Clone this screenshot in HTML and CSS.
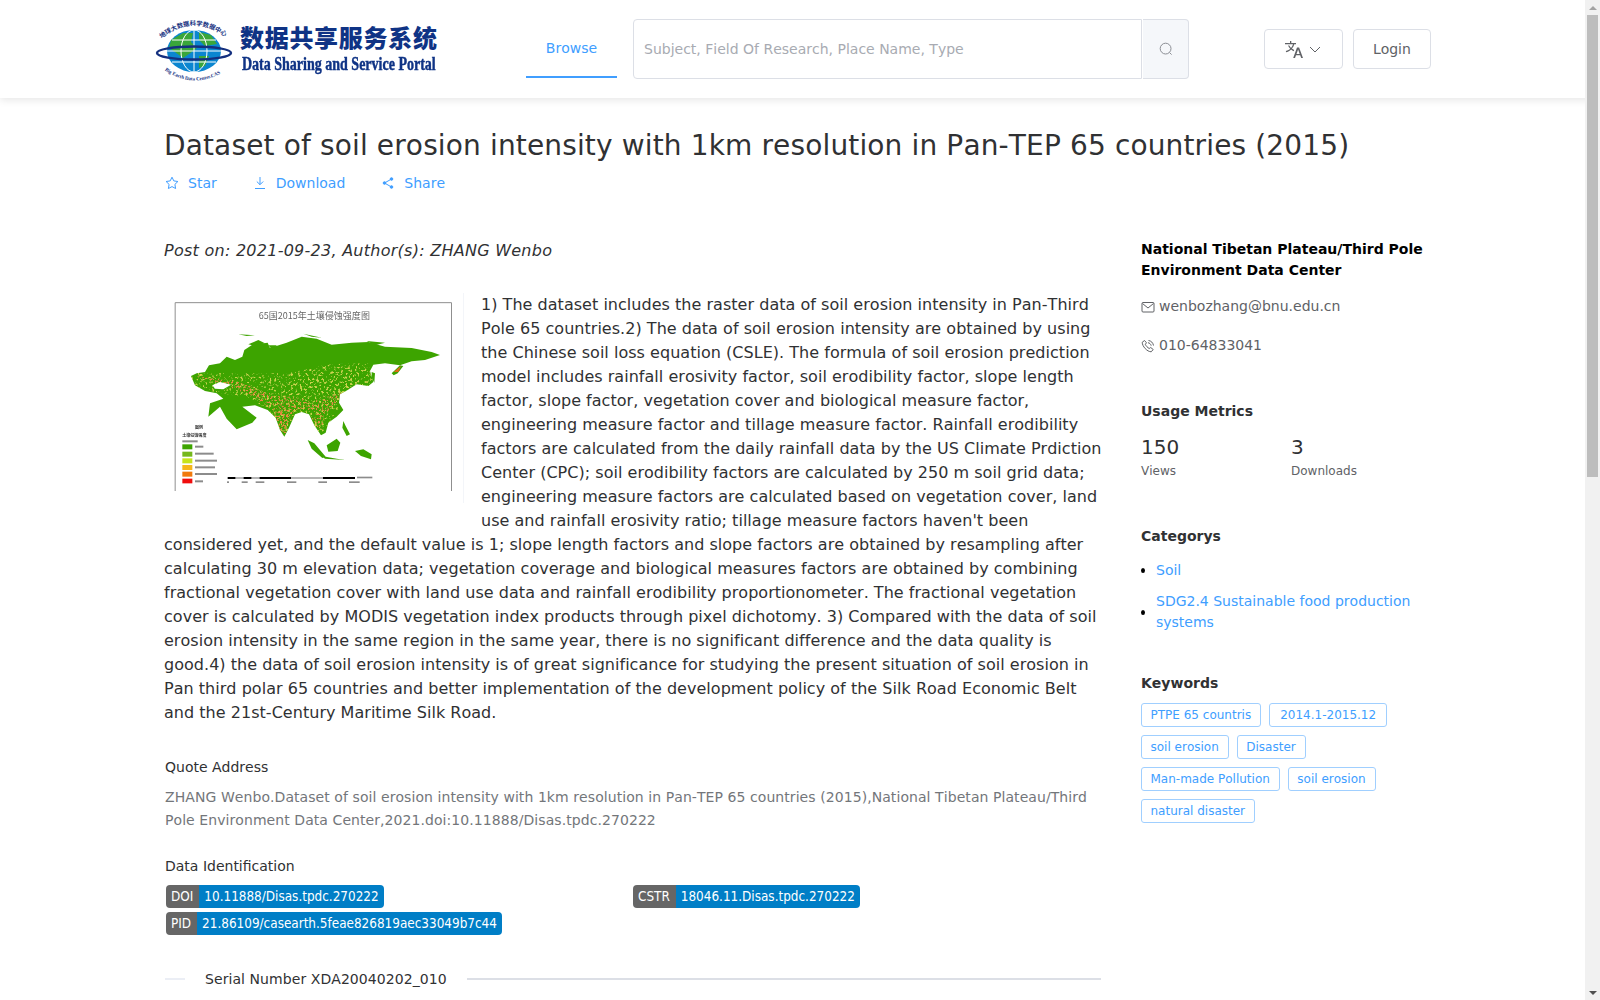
FILE: index.html
```html
<!DOCTYPE html>
<html lang="en">
<head>
<meta charset="utf-8">
<title>Dataset of soil erosion intensity</title>
<link rel="stylesheet" href="styles.css">
</head>
<body>
<header class="topbar">
  <a class="logo">
    <svg class="globe" width="80" height="64" viewBox="0 0 80 64">
      <defs><path id="arcT" d="M7 22 Q41 -7 76 22"/><path id="arcB" d="M10 51 Q40 73 72 53"/></defs>
      <ellipse cx="41" cy="33" rx="27" ry="21" fill="#0b86d0"/>
      <path d="M18 22 L30 15 L40 15 L38 24 L44 30 L36 36 L30 40 L22 34 L16 30 Z M46 14 L58 17 L64 26 L52 28 L46 22 Z M46 38 L56 38 L52 48 L46 50 Z" fill="#3aa63a"/>
      <g fill="none" stroke="#fff" stroke-width="1"><ellipse cx="41" cy="33" rx="13" ry="21"/><path d="M41 12V54M19 22H63M14 33H68M19 44H63"/></g>
      <ellipse cx="41" cy="35" rx="37" ry="6.500" fill="none" stroke="#14307f" stroke-width="2.400"/>
      <text class="globe-text"><textPath href="#arcT" startOffset="2">地球大数据科学数据中心</textPath></text>
      <text class="globe-sub"><textPath href="#arcB" startOffset="2">Big Earth Data Center.CAS</textPath></text>
    </svg>
    <span class="logo-words">
      <span class="logo-cn">数据共享服务系统</span>
      <span class="logo-en">Data Sharing and Service Portal</span>
    </span>
  </a>
  <nav class="tabs"><a class="tab">Browse</a></nav>
  <div class="search">
    <input class="search-input" placeholder="Subject, Field Of Research, Place Name, Type">
    <button class="search-btn" aria-label="Search">
      <svg width="14" height="14" viewBox="0 0 14 14" fill="none" stroke="#8b8e94" stroke-width="1"><circle cx="6.600" cy="6.600" r="5.400"/><path d="M10.600 10.600 12.600 12.600"/></svg>
    </button>
  </div>
  <div class="actions">
    <button class="btn lang" aria-label="Language">
      <svg width="18" height="17" viewBox="0 0 18 17" fill="#606266"><path d="M5 0h1.300v2H11v1.200H9.300c-.5 1.700-1.300 3.200-2.400 4.400 .7.6 1.500 1.100 2.300 1.500l-.5 1.100c-1-.5-1.800-1-2.600-1.700C5.100 9.600 3.800 10.500 1.200 11.200L.8 10.100c2.200-.6 3.400-1.400 4.400-2.300C4.300 6.800 3.600 5.700 3 4.500h1.300c.5 1 1.100 1.800 1.700 2.500.9-1 1.600-2.300 2-3.800H0V2h5z"/><path d="M12 6.500h2.100L18 17h-1.800l-1-2.700h-4.200l-1 2.700H8.200zM11.500 12.900h3.200L13.100 8.500z"/></svg>
      <svg class="chev" width="12" height="7" viewBox="0 0 12 7" fill="none" stroke="#606266" stroke-width="1"><path d="M1 1 6 6 11 1"/></svg>
    </button>
    <button class="btn login">Login</button>
  </div>
</header>

<main class="page">
  <h1 class="title">Dataset of soil erosion intensity with 1km resolution in Pan-TEP 65 countries (2015)</h1>
  <div class="links">
    <a class="link">
      <svg width="14" height="14" viewBox="0 0 14 14" fill="none" stroke="#409eff" stroke-width="1"><path d="M7 1.200 8.800 4.900 12.900 5.500 9.900 8.400 10.600 12.500 7 10.600 3.400 12.500 4.100 8.400 1.100 5.500 5.200 4.900Z"/></svg>
      Star</a>
    <a class="link">
      <svg width="14" height="14" viewBox="0 0 14 14" fill="none" stroke="#409eff" stroke-width="1"><path d="M7 1V8.500M3.800 5.500 7 8.700 10.200 5.500M2 12.500H12"/></svg>
      Download</a>
    <a class="link">
      <svg width="14" height="14" viewBox="0 0 14 14" fill="#409eff" stroke="#409eff" stroke-width="1"><path d="M10.500 3 3.500 7 10.500 11" fill="none"/><circle cx="10.500" cy="3" r="1.300"/><circle cx="3.500" cy="7" r="1.300"/><circle cx="10.500" cy="11" r="1.300"/></svg>
      Share</a>
  </div>

  <div class="columns">
    <article class="content">
      <p class="byline">Post on: 2021-09-23, Author(s): ZHANG Wenbo</p>
      <div class="desc">
        <svg class="thumb" width="300" height="210" viewBox="27 21 900 630">
          <defs>
            <filter id="soft" x="-5%" y="-5%" width="110%" height="110%"><feGaussianBlur stdDeviation="1.300"/></filter>
            <filter id="olive" x="0" y="0" width="100%" height="100%"><feTurbulence type="fractalNoise" baseFrequency=".14" numOctaves="2" seed="4"/><feColorMatrix values="0 0 0 0 .62  0 0 0 0 .66  0 0 0 0 .08  6 0 0 0 -3.350"/><feComposite in2="SourceAlpha" operator="in"/></filter>
            <filter id="rust" x="0" y="0" width="100%" height="100%"><feTurbulence type="fractalNoise" baseFrequency=".17" numOctaves="2" seed="9"/><feColorMatrix values="0 0 0 0 .80  0 0 0 0 .25  0 0 0 0 .06  7 0 0 0 -3.700"/><feComposite in2="SourceAlpha" operator="in"/></filter>
            <clipPath id="landClip"><path d="M108 270 125 262 150 258 162 238 195 232 215 212 240 222 262 212 268 192 292 176 338 170 345 186 395 170 440 152 485 158 530 176 590 170 640 168 690 182 770 186 830 198 855 207 810 222 770 226 735 238 690 232 655 236 645 255 655 288 640 300 605 295 578 312 555 325 552 350 565 372 545 392 520 410 512 440 498 448 478 418 462 385 440 378 420 385 402 425 388 452 375 432 362 395 338 372 300 358 262 362 305 395 292 410 245 430 215 398 195 362 160 392 165 352 205 338 185 322 150 315 120 298Z"/></clipPath>
          </defs>
          <path class="thumb-frame" d="M60.500 615V50H889.500V615"/>
          <path d="M927 21V651" stroke="#e6ebf2" stroke-width="3"/>
          <text class="map-title" x="478" y="98">65国2015年土壤侵蚀强度图</text>
          <g filter="url(#soft)">
            <path fill="#3ea406" d="M108 270 125 262 150 258 162 238 195 232 215 212 240 222 262 212 268 192 292 176 338 170 345 186 395 170 440 152 485 158 530 176 590 170 640 168 690 182 770 186 830 198 855 207 810 222 770 226 735 238 690 232 655 236 645 255 655 288 640 300 605 295 578 312 555 325 552 350 565 372 545 392 520 410 512 440 498 448 478 418 462 385 440 378 420 385 402 425 388 452 375 432 362 395 338 372 300 358 262 362 305 395 292 410 245 430 215 398 195 362 160 392 165 352 205 338 185 322 150 315 120 298Z"/>
            <g clip-path="url(#landClip)">
              <path filter="url(#olive)" d="M108 260 250 262 400 262 520 235 640 232 655 300 560 350 505 440 385 452 340 370 280 335 190 320 108 300Z"/>
              <path filter="url(#olive)" d="M400 262 640 250 640 300 540 330 420 310Z"/>
              <path filter="url(#rust)" d="M120 270 240 285 340 320 470 345 560 320 545 350 500 395 455 370 420 372 395 425 375 430 358 375 280 325 200 295Z"/>
              <path filter="url(#rust)" d="M355 375 410 375 392 445 372 430Z"/>
              <path filter="url(#rust)" d="M470 395 510 395 500 430 485 425Z"/>
            </g>
            <path fill="#fff" d="M172 298 195 288 228 296 205 310 180 308Z"/>
            <path fill="#3ea406" d="M710 262 735 238 745 240 728 262 716 268ZM650 258 660 262 658 290 650 275ZM458 462 478 472 512 512 502 516 470 488ZM515 478 545 458 556 470 548 495 520 497ZM500 510 545 518 570 522 510 518ZM565 405 572 420 585 445 575 450 562 425ZM600 495 625 490 650 505 648 520 618 510ZM250 145 300 148 275 150ZM445 143 500 155 470 152ZM635 165 690 170 660 178ZM280 175 310 162 330 172 300 180ZM340 178 365 178 355 195Z"/>
            <path fill="#e06a12" d="M716 258 738 240 730 258Z"/>
            <rect x="82" y="475" width="30" height="15" fill="#3ea406"/><rect x="82" y="497" width="30" height="15" fill="#75b81e"/><rect x="82" y="517" width="30" height="15" fill="#c6e41a"/><rect x="82" y="537" width="30" height="15" fill="#f6b71a"/><rect x="82" y="557" width="30" height="15" fill="#f17a10"/><rect x="82" y="578" width="30" height="14" fill="#f01010"/>
            <g fill="#000"><rect x="218" y="573" width="24" height="6"/><rect x="265" y="573" width="25" height="6"/><rect x="313" y="573" width="95" height="6"/><rect x="503" y="573" width="97" height="6"/></g>
            <g fill="#b5b5b5"><rect x="242" y="573" width="23" height="6"/><rect x="290" y="573" width="23" height="6"/><rect x="408" y="573" width="95" height="6"/></g>
            <g class="smudge"><rect x="120" y="479" width="25" height="6"/><rect x="120" y="500" width="56" height="6"/><rect x="120" y="521" width="66" height="6"/><rect x="120" y="541" width="60" height="6"/><rect x="120" y="561" width="66" height="6"/><rect x="120" y="583" width="24" height="6"/><rect x="82" y="463" width="46" height="6"/><rect x="606" y="572" width="46" height="5"/><rect x="216" y="586" width="6" height="5"/><rect x="260" y="586" width="18" height="5"/><rect x="302" y="586" width="26" height="5"/><rect x="396" y="586" width="28" height="5"/><rect x="490" y="586" width="26" height="5"/><rect x="582" y="586" width="32" height="5"/></g>
            <text class="strong" x="120" y="430">图例</text>
          </g>
          <text class="strong" x="82" y="453" filter="url(#soft)">土壤侵蚀强度</text>
        </svg>
        1) The dataset includes the raster data of soil erosion intensity in Pan-Third Pole 65 countries.2) The data of soil erosion intensity are obtained by using the Chinese soil loss equation (CSLE). The formula of soil erosion prediction model includes rainfall erosivity factor, soil erodibility factor, slope length factor, slope factor, vegetation cover and biological measure factor, engineering measure factor and tillage measure factor. Rainfall erodibility factors are calculated from the daily rainfall data by the US Climate Prdiction Center (CPC); soil erodibility factors are calculated by 250 m soil grid data; engineering measure factors are calculated based on vegetation cover, land use and rainfall erosivity ratio; tillage measure factors haven't been considered yet, and the default value is 1; slope length factors and slope factors are obtained by resampling after calculating 30 m elevation data; vegetation coverage and biological measures factors are obtained by combining fractional vegetation cover with land use data and rainfall erodibility proportionometer. The fractional vegetation cover is calculated by MODIS vegetation index products through pixel dichotomy. 3) Compared with the data of soil erosion intensity in the same region in the same year, there is no significant difference and the data quality is good.4) the data of soil erosion intensity is of great significance for studying the present situation of soil erosion in Pan third polar 65 countries and better implementation of the development policy of the Silk Road Economic Belt and the 21st-Century Maritime Silk Road.
      </div>

      <h3 class="sub quote-head">Quote Address</h3>
      <p class="quote">ZHANG Wenbo.Dataset of soil erosion intensity with 1km resolution in Pan-TEP 65 countries (2015),National Tibetan Plateau/Third Pole Environment Data Center,2021.doi:10.11888/Disas.tpdc.270222</p>

      <h3 class="sub id-head">Data Identification</h3>
      <div class="ids">
        <span class="badge"><b class="badge-k">DOI</b><span class="badge-v">10.11888/Disas.tpdc.270222</span></span>
        <span class="badge"><b class="badge-k">CSTR</b><span class="badge-v">18046.11.Disas.tpdc.270222</span></span>
        <span class="badge"><b class="badge-k">PID</b><span class="badge-v">21.86109/casearth.5feae826819aec33049b7c44</span></span>
      </div>

      <div class="divider"><span class="divider-text">Serial Number XDA20040202_010</span></div>
    </article>

    <aside class="side">
      <section class="center">
        <h4 class="center-name">National Tibetan Plateau/Third Pole Environment Data Center</h4>
        <p class="contact">
          <svg width="14" height="14" viewBox="0 0 14 14" fill="none" stroke="#606266" stroke-width="1"><rect x="1" y="2.500" width="12" height="9.500" rx="1"/><path d="M1.500 3.500 7 8l5.500-4.500"/></svg>
          wenbozhang@bnu.edu.cn</p>
        <p class="contact phone">
          <svg width="14" height="14" viewBox="0 0 14 14" fill="none" stroke="#606266" stroke-width="1"><path d="M3.500 1.500 1.200 3.300c0 4 5 9.500 9 9.500l2-2.300-2.500-2-1.500 1C6.500 8.500 5 7 4.300 5.300l1.200-1.500zM7.500 1.500c2.700.4 4.500 2.200 5 5M7 3.700c1.600.3 2.800 1.400 3.200 3"/></svg>
          010-64833041</p>
      </section>
      <section class="usage">
        <h4 class="side-head">Usage Metrics</h4>
        <div class="stats">
          <div class="stat"><span class="stat-n">150</span><span class="stat-l">Views</span></div>
          <div class="stat"><span class="stat-n">3</span><span class="stat-l">Downloads</span></div>
        </div>
      </section>
      <section class="cats">
        <h4 class="side-head">Categorys</h4>
        <ul class="cat-list">
          <li class="cat"><a>Soil</a></li>
          <li class="cat"><a>SDG2.4 Sustainable food production systems</a></li>
        </ul>
      </section>
      <section class="keys">
        <h4 class="side-head">Keywords</h4>
        <div class="tags">
          <span class="tag">PTPE 65 countris</span><span class="tag tag-wide">2014.1-2015.12</span>
          <span class="tag">soil erosion</span><span class="tag">Disaster</span>
          <span class="tag">Man-made Pollution</span><span class="tag">soil erosion</span>
          <span class="tag">natural disaster</span>
        </div>
      </section>
    </aside>
  </div>
</main>

<div class="scrollbar" aria-hidden="true">
  <span class="sb-up"></span>
  <span class="sb-thumb"></span>
  <span class="sb-down"></span>
</div>
</body>
</html>
```
FILE: styles.css
```css
* { box-sizing: border-box; }
html, body { height: 1000px; overflow: hidden; }
body {
  margin: 0;
  font-family: "DejaVu Sans", sans-serif;
  font-kerning: none;
  color: #303133;
  background: #fff;
}
h1, h3, h4, p, ul { margin: 0; padding: 0; }

/* drawn scrollbar, sits over the right edge of the page */
.scrollbar {
  position: fixed;
  top: 0;
  right: 0;
  bottom: 0;
  width: 15px;
  background: #f1f1f1;
  z-index: 5;
}
.sb-thumb { position: absolute; top: 15px; left: 2px; width: 11px; height: 462px; background: #bdbdbd; }
.sb-up, .sb-down { position: absolute; left: 3.500px; width: 0; height: 0; border: 4px solid transparent; }
.sb-up { top: 1.500px; border-bottom-color: #a3a3a3; }
.sb-down { bottom: 1.500px; border-top-color: #505050; }

.topbar {
  height: 98px;
  display: flex;
  align-items: flex-start;
  padding-left: 153px;
  background: #fff;
  box-shadow: 0 2px 8px rgba(0, 0, 0, .1);
}
.logo { display: flex; width: 373px; padding-top: 18px; }
.globe { flex: none; }
.globe-text { font: 700 6.300px "Noto Sans CJK SC", sans-serif; fill: #14307f; }
.globe-sub { font: 700 5px "Liberation Serif", serif; fill: #14307f; }
.logo-words { display: flex; flex-direction: column; margin-left: 7px; padding-top: 6px; }
.logo-cn {
  font: 900 24px/26px "Noto Sans CJK SC", sans-serif;
  letter-spacing: .7px;
  color: #0f3385;
  white-space: nowrap;
}
.logo-en {
  font: 700 18px/20px "Liberation Serif", serif;
  color: #0f3385;
  white-space: nowrap;
  margin-top: 4px;
  margin-left: 2px;
  transform: scaleX(.778);
  transform-origin: left center;
  -webkit-text-stroke: .45px #0f3385;
}
.tabs { display: flex; height: 78px; }
.tab {
  width: 91px;
  height: 78px;
  padding-top: 38px;
  line-height: 20px;
  text-align: center;
  font-size: 14px;
  color: #409eff;
  border-bottom: 2px solid #409eff;
}
.search { display: flex; width: 556px; height: 60px; margin: 19px 0 0 16px; }
.search-input {
  flex: 1;
  min-width: 0;
  height: 60px;
  padding: 0 10px;
  border: 1px solid #dcdfe6;
  border-radius: 4px 0 0 4px;
  font: 14px "DejaVu Sans", sans-serif;
  font-kerning: none;
  color: #606266;
  outline: 0;
}
.search-input::placeholder { color: #a8abb2; }
.search-btn {
  width: 46px;
  margin-left: 1px;
  display: flex;
  align-items: center;
  justify-content: center;
  background: #f5f7fa;
  border: 1px solid #dcdfe6;
  border-left: 0;
  border-radius: 0 4px 4px 0;
  padding: 0;
}
.actions { display: flex; gap: 10px; margin: 29px 0 0 75px; }
.btn {
  height: 40px;
  display: flex;
  align-items: center;
  justify-content: center;
  background: #fff;
  border: 1px solid #dcdfe6;
  border-radius: 4px;
  font: 14px "DejaVu Sans", sans-serif;
  color: #606266;
  padding: 0;
}
.lang { width: 79px; gap: 6px; padding-right: 1px; }
.login { width: 78px; }

.page { width: 1267px; margin-left: 164px; padding: 32px 0 0; }
.title { font-size: 28px; font-weight: 400; line-height: 32px; letter-spacing: .14px; color: #303133; white-space: nowrap; }
.links { display: flex; gap: 36px; margin-top: 12px; padding-left: 1px; }
.link { display: flex; align-items: center; gap: 9px; font-size: 14px; line-height: 18px; color: #409eff; }

.columns { display: flex; justify-content: space-between; margin-top: 47px; }
.content { width: 938px; }
.byline { font-size: 16px; font-style: italic; line-height: 24px; letter-spacing: .26px; color: #303133; }
.desc { margin-top: 30px; font-size: 16px; line-height: 24px; letter-spacing: .03px; color: #303133; }
.thumb { float: left; margin: 0 17px 16px 0; }
.thumb-frame { fill: none; stroke: #8f8f8f; stroke-width: 3; }
.map-title { font: 27px "Noto Sans CJK SC", sans-serif; fill: #666; text-anchor: middle; filter: url(#soft); }
.smudge { fill: #8c8c8c; }
.strong { font: 700 12px "Noto Sans CJK SC", sans-serif; fill: #333; }

.sub { font-size: 14px; font-weight: 400; line-height: 20px; color: #303133; padding-left: 1px; }
.quote-head { margin-top: 32px; }
.quote { margin-top: 9px; padding-left: 1px; font-size: 14px; line-height: 23px; letter-spacing: .07px; color: #73767a; }
.id-head { margin-top: 24px; }
.ids { display: grid; grid-template-columns: 467px 467px; gap: 4px 0; margin-top: 9px; padding-left: 2px; justify-items: start; }
.badge {
  display: inline-flex;
  height: 23px;
  line-height: 23px;
  font-family: "DejaVu Sans Condensed", "DejaVu Sans", sans-serif;
  font-stretch: condensed;
  font-size: 13.400px;
  color: #fff;
  border-radius: 4px;
  overflow: hidden;
}
.badge-k { font-weight: 400; background: #666; padding: 0 6px 0 5px; }
.badge-v { background: #007ec6; padding: 0 5px; }
.divider { display: flex; align-items: center; margin: 32px 1px 0 0; height: 24px; font-size: 14px; letter-spacing: .07px; }
.divider::before { content: ""; width: 20px; height: 2px; background: #ebeef5; margin-left: 1px; }
.divider::after { content: ""; flex: 1; height: 2px; background: #dcdfe6; }
.divider-text { padding: 0 20px; color: #303133; }

.side { width: 290px; }
.center-name { font-size: 14px; font-weight: 700; line-height: 21px; color: #000; }
.contact { display: flex; align-items: center; gap: 4px; margin-top: 15px; font-size: 14px; line-height: 21px; color: #606266; }
.contact.phone { margin-top: 18px; }
.side-head { font-size: 14px; font-weight: 700; line-height: 20px; color: #303133; }
.usage { margin-top: 45px; }
.stats { display: grid; grid-template-columns: 150px 140px; margin-top: 13px; }
.stat { display: flex; flex-direction: column; }
.stat-n { font-size: 20px; line-height: 26px; color: #303133; }
.stat-l { font-size: 12px; line-height: 20px; margin-top: 1px; color: #606266; }
.cats { margin-top: 45px; }
.cat-list { list-style: none; margin-top: 14px; }
.cat { display: flex; align-items: center; margin-bottom: 10px; font-size: 14px; line-height: 21px; color: #409eff; }
.cat::before { content: ""; flex: none; width: 4px; height: 5px; margin-right: 11px; background: #000; border-radius: 50%; }
.keys { margin-top: 40px; }
.tags { display: flex; flex-wrap: wrap; gap: 8px; margin-top: 10px; width: 290px; }
.tag {
  height: 24px;
  line-height: 22px;
  padding: 0 9px 0 8.500px;
  font-size: 12px;
  color: #409eff;
  border: 1px solid #a0cfff;
  border-radius: 3px;
}
.tag-wide { padding: 0 10px; }
```
